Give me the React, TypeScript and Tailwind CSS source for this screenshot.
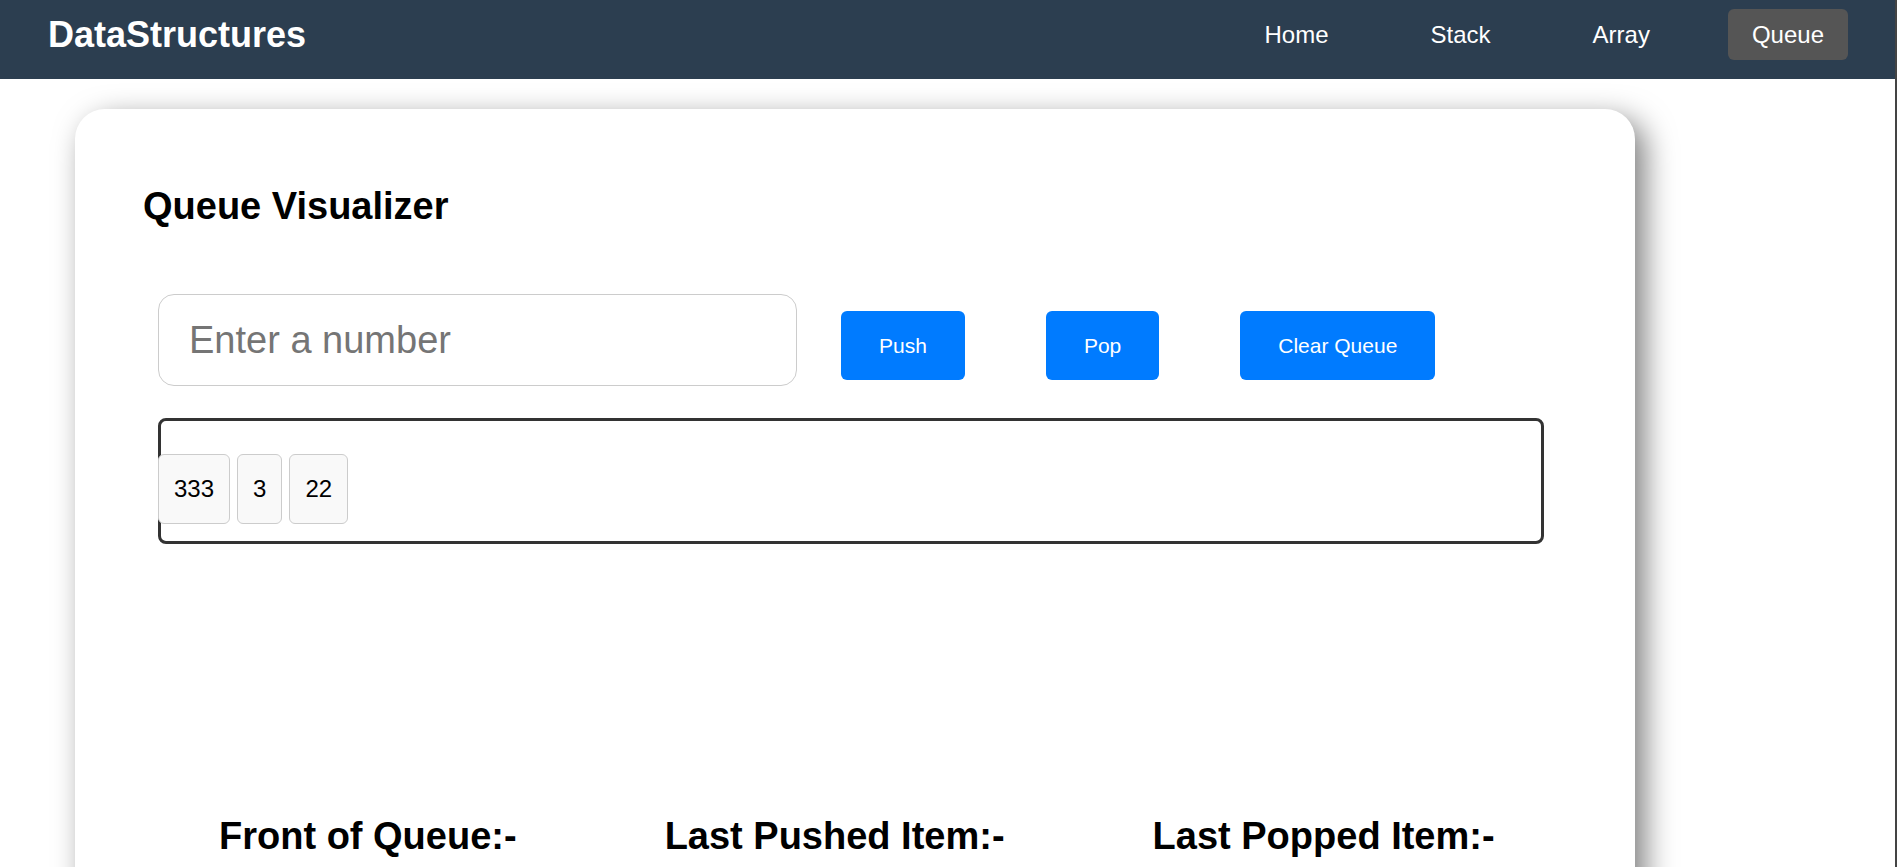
import { useState } from "react";
import type { FormEvent } from "react";

const links = ["Home", "Stack", "Array", "Queue"];

const buttonClass =
  "h-[69px] shrink-0 cursor-pointer rounded-md bg-[#007bff] px-[38px] text-[21px] text-white";

function NavBar() {
  return (
    <header className="relative z-10 flex h-[79px] items-start justify-between bg-[#2c3e50] pt-[9px] pr-[47px] pl-12 text-white">
      <a href="#home" className="pt-[5px] text-4xl leading-[42px] font-bold">
        DataStructures
      </a>
      <nav className="flex gap-[54px]">
        {links.map((link) => (
          <a
            key={link}
            href={"#" + link.toLowerCase()}
            className={
              link === "Queue"
                ? "rounded-md bg-[#555] px-6 py-3 text-2xl leading-[27px]"
                : "rounded-md px-6 py-3 text-2xl leading-[27px]"
            }
          >
            {link}
          </a>
        ))}
      </nav>
    </header>
  );
}

export default function App() {
  const [items, setItems] = useState(["333", "3", "22"]);
  const [value, setValue] = useState("");

  const push = (event: FormEvent) => {
    event.preventDefault();
    if (value) setItems([...items, value]);
    setValue("");
  };

  return (
    <div className="flex h-screen flex-col overflow-hidden border-r-2 border-[#444] bg-white font-['Liberation_Sans',Arial,sans-serif] text-black">
      <NavBar />
      <main className="mt-[30px] mr-[260px] -mb-10 ml-[75px] flex-1 rounded-[30px] bg-white pt-[75px] pr-[91px] pl-[68px] shadow-[10px_10px_30px_rgba(0,0,0,0.5)]">
        <h1 className="text-[38px] leading-[44px] font-bold">Queue Visualizer</h1>
        <div className="pl-[15px]">
          <form onSubmit={push} className="mt-[66px] flex items-end">
            <input
              type="text"
              aria-label="Enter a number"
              placeholder="Enter a number"
              value={value}
              onChange={(event) => setValue(event.target.value)}
              className="h-[92px] w-[639px] min-w-0 rounded-2xl border border-[#ccc] px-[30px] text-[38px] placeholder:text-[#757575]"
            />
            <div className="mb-1.5 ml-11 flex gap-[81px]">
              <button type="submit" className={buttonClass}>
                Push
              </button>
              <button type="button" className={buttonClass} onClick={() => setItems(items.slice(1))}>
                Pop
              </button>
              <button type="button" className={buttonClass} onClick={() => setItems([])}>
                Clear Queue
              </button>
            </div>
          </form>
          <section className="mt-8 h-[126px] rounded-lg border-[3px] border-[#333] pt-[33px]">
            <ul className="-ml-[3px] flex gap-[7px]">
              {items.map((item, index) => (
                <li
                  key={index}
                  className="flex h-[70px] items-center rounded-md border border-[#ccc] bg-[#f9f9f9] px-[15px] text-2xl"
                >
                  {item}
                </li>
              ))}
            </ul>
          </section>
        </div>
        <div className="mt-[270px] flex gap-[148px] pl-[76px] text-[38px] leading-[44px] font-bold whitespace-nowrap">
          <h2>Front of Queue:-</h2>
          <h2>Last Pushed Item:-</h2>
          <h2>Last Popped Item:-</h2>
        </div>
      </main>
    </div>
  );
}
